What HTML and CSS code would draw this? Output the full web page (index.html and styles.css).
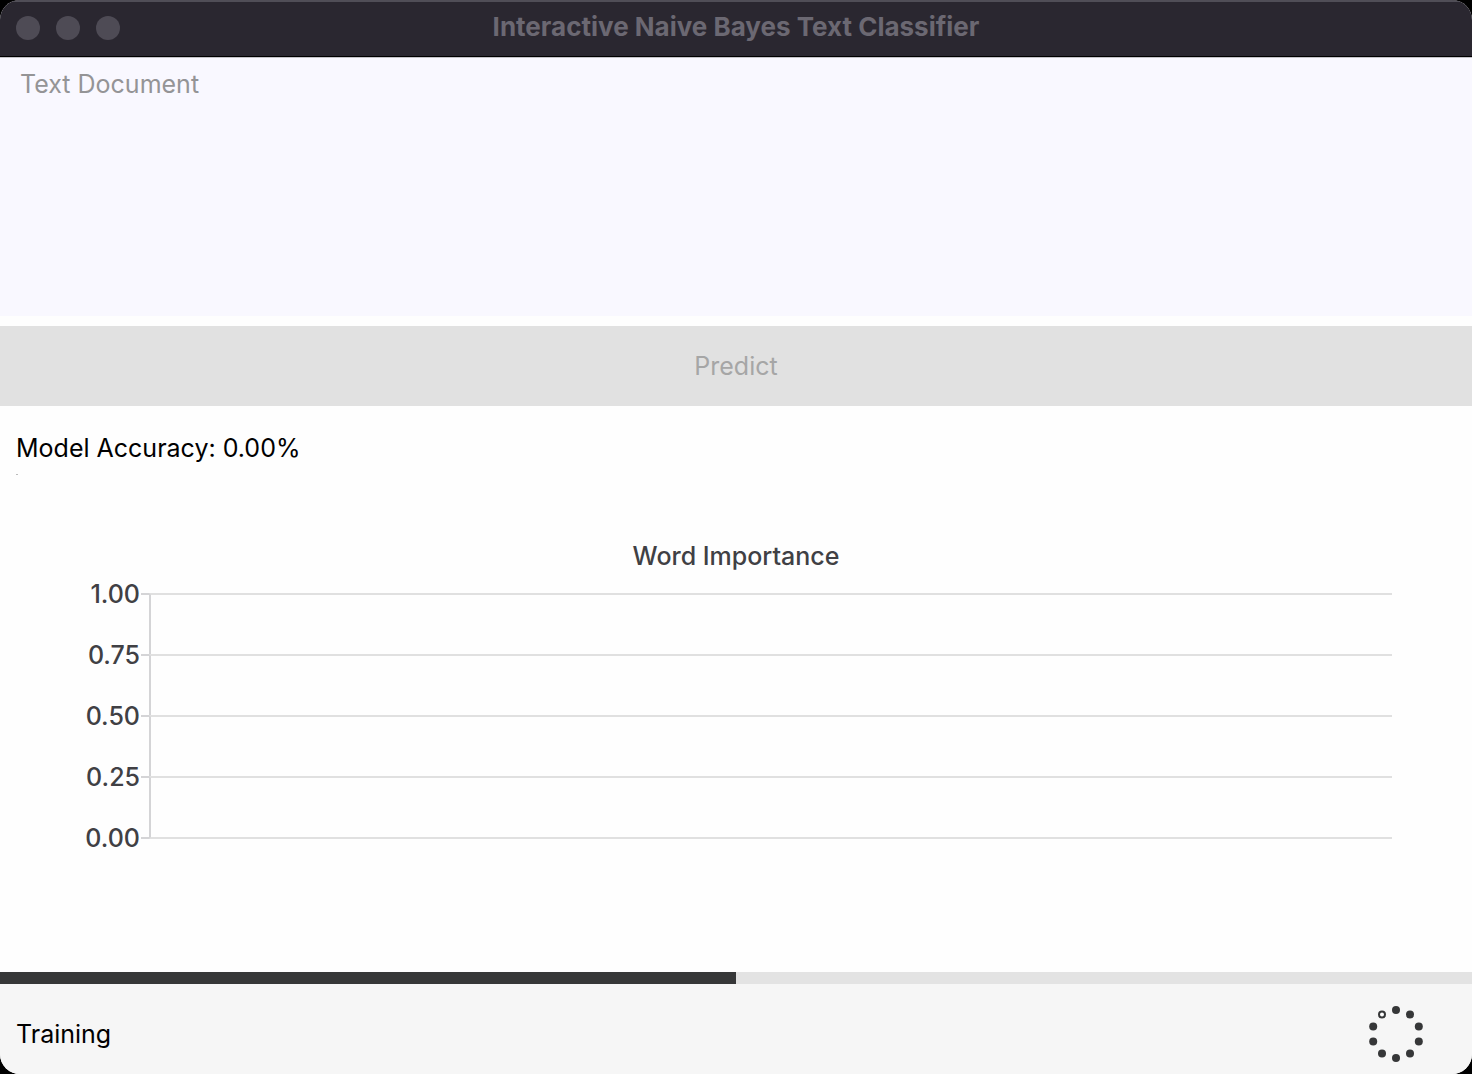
FILE: index.html
```html
<!DOCTYPE html>
<html lang="en">
<head>
<meta charset="utf-8">
<meta name="viewport" content="width=device-width, initial-scale=1">
<title>Interactive Naive Bayes Text Classifier</title>
<link rel="stylesheet" href="styles.css">
</head>
<body>
<div class="window">
  <header class="titlebar">
    <div class="controls">
      <button class="dot" type="button" aria-label="Close"></button>
      <button class="dot" type="button" aria-label="Minimize"></button>
      <button class="dot" type="button" aria-label="Zoom"></button>
    </div>
    <h1 class="title">Interactive Naive Bayes Text Classifier</h1>
  </header>
  <main class="content">
    <textarea class="document" aria-label="Text Document" placeholder="Text Document"></textarea>
    <button class="predict" type="button" disabled>Predict</button>
    <section class="results">
      <p class="accuracy">Model Accuracy: 0.00%</p>
      <div class="scores"></div>
    </section>
    <section class="chart">
      <h2 class="chart-title">Word Importance</h2>
      <div class="plot">
        <ul class="labels">
          <li>1.00</li><li>0.75</li><li>0.50</li><li>0.25</li><li>0.00</li>
        </ul>
        <div class="bands ticks"><i></i><i></i><i></i><i></i></div>
        <div class="bands area"><i></i><i></i><i></i><i></i></div>
      </div>
    </section>
  </main>
  <progress class="progress" max="100" value="50" aria-label="Training progress"></progress>
  <footer class="status">
    <span>Training</span>
    <svg class="spinner" viewBox="0 0 60 60" aria-hidden="true">
      <g fill="#363738">
        <circle cx="30" cy="6" r="4"/><circle cx="44" cy="10.5" r="4"/>
        <circle cx="52.8" cy="22.6" r="4"/><circle cx="52.8" cy="37.4" r="4"/>
        <circle cx="44" cy="49.5" r="4"/><circle cx="30" cy="54" r="4"/>
        <circle cx="16" cy="49.5" r="4"/><circle cx="7.2" cy="37.4" r="4"/>
        <circle cx="7.2" cy="22.6" r="4"/>
      </g>
      <circle cx="16" cy="10.5" r="3" fill="#fff" stroke="#363738" stroke-width="2"/>
    </svg>
  </footer>
</div>
</body>
</html>
```
FILE: styles.css
```css
* { box-sizing: border-box; }
body {
  margin: 0;
  background: #000;
  color: #000;
  font: 25px/32px Inter, "Liberation Sans", sans-serif;
}
h1, h2, p, ul { margin: 0; padding: 0; }
.window {
  display: flex;
  flex-direction: column;
  min-height: 100vh;
  overflow: hidden;
  border-radius: 20px;
  background: #fefefe;
}
.titlebar {
  display: grid;
  grid-template-columns: 1fr auto 1fr;
  align-items: center;
  height: 57px;
  padding: 0 16px 2px;
  border-top: 2px solid #504e57;
  border-bottom: 1px solid #000;
  background: #2a2730;
}
.controls { display: flex; gap: 16px; }
.dot {
  width: 24px;
  height: 24px;
  padding: 0;
  border: 0;
  border-radius: 50%;
  background: #4e4b55;
}
.title {
  padding-bottom: 2px;
  color: #6b6872;
  font-size: 26px;
  font-weight: 700;
}
.content { display: flex; flex: 1; flex-direction: column; }
.document {
  display: block;
  width: 100%;
  height: 259px;
  padding: 10px 20px;
  border: 0;
  border-top: 1px solid #c4c3c8;
  outline: 0;
  resize: none;
  background: #f9f8ff;
  color: #000;
  font: inherit;
}
.document::placeholder { color: #949496; opacity: 1; }
.predict {
  height: 80px;
  margin-top: 10px;
  padding: 0;
  border: 0;
  background: #e1e1e1;
  color: #a6a6a6;
  font: inherit;
}
.results { padding: 26px 16px 0; }
.scores { width: 2px; height: 1px; margin-top: 10px; background: #bbb; }
.chart {
  padding: 65px 80px 0;
  color: #404044;
  font-weight: 500;
}
.chart-title { font-size: 25px; font-weight: 500; text-align: center; }
.plot { display: grid; grid-template-columns: 60px 8px 1fr; column-gap: 1px; margin-top: -8px; }
.labels { list-style: none; line-height: 61px; text-align: right; }
.bands { display: flex; flex-direction: column; padding-top: 29px; }
.bands i { height: 61px; border-top: 2px solid #e0e0e0; }
.bands i:last-child { height: 63px; border-bottom: 2px solid #e0e0e0; }
.ticks i, .ticks i:last-child { border-color: #d4d4d6; }
.area { margin-left: -1px; }
.area i { border-left: 2px solid #d4d4d6; }
.progress {
  display: block;
  width: 100%;
  height: 12px;
  border: 0;
  appearance: none;
  background: #e3e3e3;
}
.progress::-webkit-progress-bar { background: #e3e3e3; }
.progress::-webkit-progress-value { background: #363738; }
.progress::-moz-progress-bar { background: #363738; }
.status {
  display: flex;
  align-items: center;
  justify-content: space-between;
  height: 90px;
  padding: 10px 46px 0 16px;
  background: #f6f6f6;
}
.spinner { width: 60px; height: 60px; }
```
